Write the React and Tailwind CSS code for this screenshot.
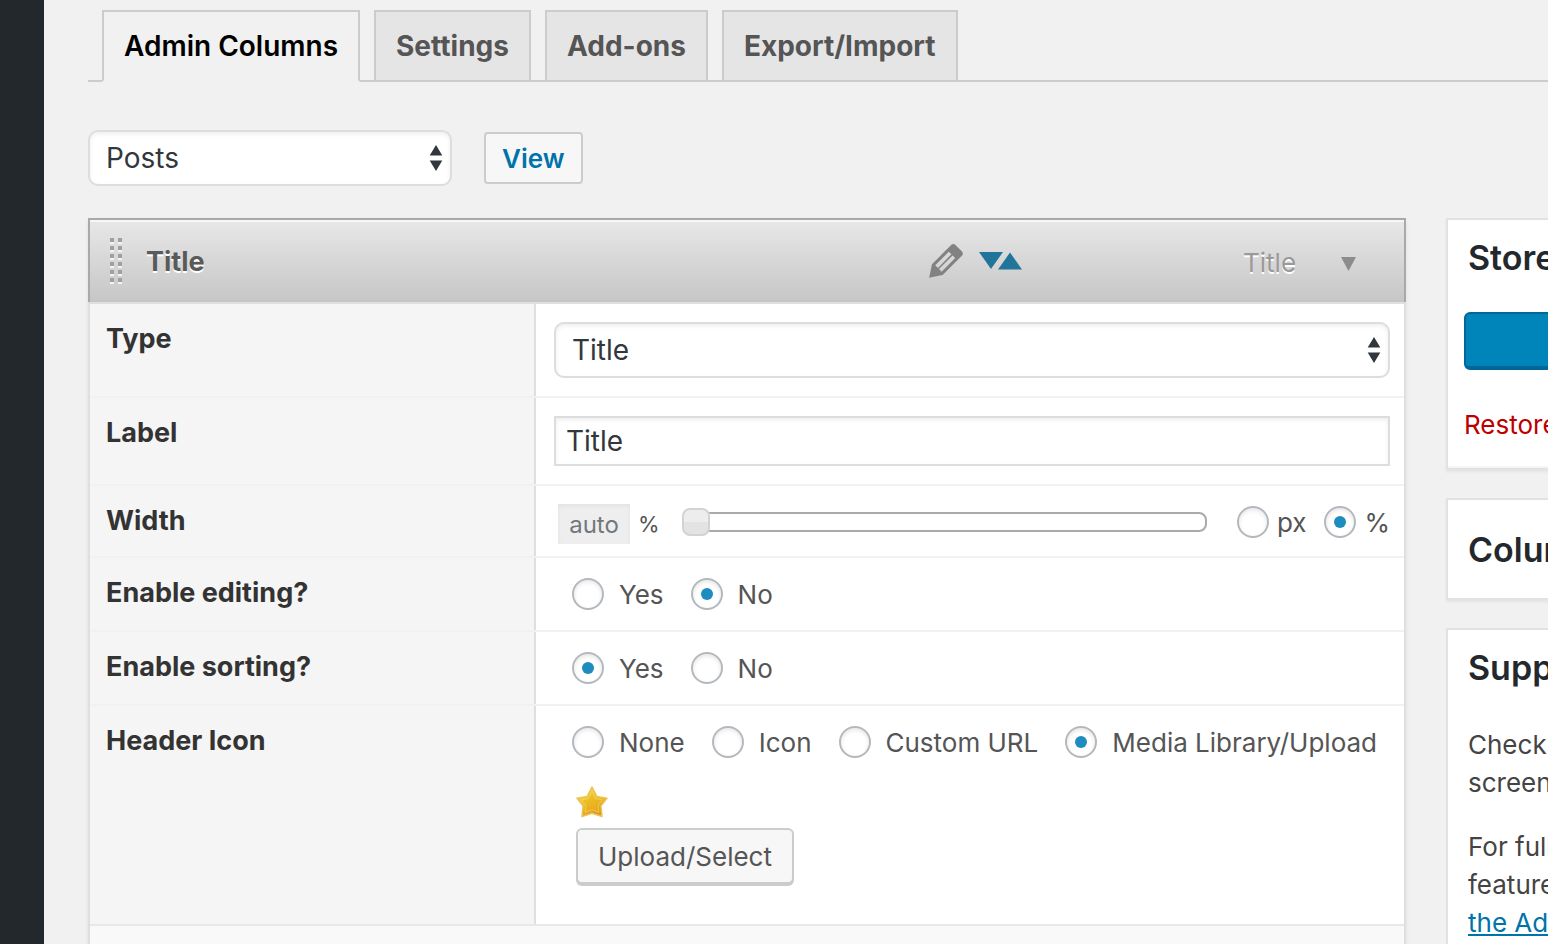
import { useState } from "react";
import clsx from "clsx";

const TABS = ["Admin Columns", "Settings", "Add-ons", "Export/Import"];

const SortArrows = ({ className }) => (
  <svg viewBox="0 0 14 26" className={className} fill="#32373c" aria-hidden="true">
    <path d="M7 0l6.300 10.500H.7z" />
    <path d="M7 26l6.300-10.500H.7z" />
  </svg>
);

const PencilIcon = () => (
  <svg viewBox="3 3 14 14" className="size-[34px]" fill="#828282" aria-hidden="true">
    <path d="M13.890 3.390l2.710 2.720c.46.46.42 1.240.03 1.640l-8.010 8.020-5.560 1.160 1.160-5.580s7.600-7.630 7.990-8.030c.39-.39 1.220-.39 1.680.07zm-2.730 2.790l-5.590 5.610 1.110 1.110 5.540-5.650zm-2.970 8.230l5.580-5.600-1.070-1.080-5.590 5.600z" />
  </svg>
);

const SortingIcon = () => (
  <svg viewBox="0 0 44 18" className="h-[18px] w-[44px]" fill="#21759b" aria-hidden="true">
    <path d="M0 0h24L12 17z" />
    <path d="M19 17.500h24L31 .5z" />
  </svg>
);

const DragHandle = () => (
  <svg viewBox="0 0 14 48" className="h-12 w-3.5" aria-hidden="true">
    {[0, 8, 16, 24, 32, 40].map((y) => (
      <g key={y}>
        <path d={`M2 ${y + 5}h4v2h-4zM10 ${y + 5}h4v2h-4z`} fill="#f3f3f3" />
        <path d={`M2 ${y + 1}h4v4h-4zM10 ${y + 1}h4v4h-4z`} fill="#a0a0a0" />
      </g>
    ))}
  </svg>
);

const StarIcon = () => (
  <svg viewBox="0 0 32 32" className="size-8" aria-hidden="true">
    <defs>
      <linearGradient id="star" x1="0" y1="0" x2="0.500" y2="1">
        <stop offset="0" stopColor="#f9e06a" />
        <stop offset="0.550" stopColor="#efc12a" />
        <stop offset="1" stopColor="#dd9522" />
      </linearGradient>
    </defs>
    <path
      d="M16 1l4.800 9.400L31 12.200l-6 7.600L26 30.500 16 27.200 6 30.500 7 19.800 1 12.200l10.200-1.800z"
      fill="url(#star)"
      stroke="#ecc452"
      strokeWidth="1.500"
      strokeLinejoin="round"
    />
    <path
      d="M16 6l3.400 6.600 7 1.300-4.200 5.300.8 7.200L16 23.800l-7 2.600.8-7.200-4.200-5.300 7-1.300z"
      fill="#e9b41c"
      fillOpacity="0.500"
      stroke="#f6dc6c"
      strokeOpacity="0.600"
    />
  </svg>
);

const SelectBox = ({ id, label, className, children }) => (
  <div className={clsx("relative", className)}>
    <select
      id={id}
      aria-label={label}
      className="block h-14 w-full appearance-none rounded-[10px] border-2 border-[#ddd] bg-white px-4 text-[28px] text-[#32373c] shadow-[inset_0_2px_4px_rgba(0,0,0,0.07)]"
    >
      {children}
    </select>
    <SortArrows className="pointer-events-none absolute top-[15px] right-[9px] h-[26px] w-3.5" />
  </div>
);

const Radio = ({ name, label, checked, onChange, className }) => (
  <label className={clsx("flex items-center whitespace-nowrap", className)}>
    <input
      type="radio"
      name={name}
      checked={checked}
      onChange={onChange}
      className="grid size-8 shrink-0 appearance-none place-items-center rounded-full border-2 border-[#b4b9be] bg-white shadow-[inset_0_2px_4px_rgba(0,0,0,0.1)] before:size-3 before:rounded-full checked:before:bg-[#1e8cbe]"
    />
    {label}
  </label>
);

const RadioRow = ({ name, options, initial }) => {
  const [value, setValue] = useState(initial);

  return (
    <div className="flex h-[72px] items-center gap-[27px] pl-9">
      {options.map((option) => (
        <Radio
          key={option}
          name={name}
          label={option}
          checked={value === option}
          onChange={() => setValue(option)}
          className="gap-[15px]"
        />
      ))}
    </div>
  );
};

const Row = ({ label, htmlFor, children, className }) => (
  <div
    className={clsx(
      "grid grid-cols-[446px_1fr] border-b-2",
      className || "border-[#f1f1f1]"
    )}
  >
    <div className="border-r-2 border-[#dfdfdf] bg-[#f5f5f5] pt-[15px] pl-4">
      <label
        htmlFor={htmlFor}
        className="text-[27px] leading-[38px] font-bold text-[#333]"
      >
        {label}
      </label>
    </div>
    <div className="min-w-0">{children}</div>
  </div>
);

const WidthField = () => {
  const [width, setWidth] = useState(0);
  const [unit, setUnit] = useState("%");

  return (
    <div className="flex h-[70px] items-center pt-0.5 pr-3.5 pl-[22px]">
      <input
        id="width"
        type="text"
        placeholder="auto"
        className="mt-1 h-10 w-[72px] bg-[#eee] text-center text-2xl shadow-[inset_0_2px_4px_rgba(0,0,0,0.05)] placeholder:text-[#72777c]"
      />
      <span className="mt-1 w-[52px] pl-2 text-[22px]">%</span>
      <input
        type="range"
        min="0"
        max="100"
        value={width}
        aria-label="Column width"
        onChange={(e) => setWidth(Number(e.target.value))}
        className="h-7 min-w-0 flex-1 appearance-none bg-transparent [&::-webkit-slider-runnable-track]:h-5 [&::-webkit-slider-runnable-track]:rounded-lg [&::-webkit-slider-runnable-track]:border-2 [&::-webkit-slider-runnable-track]:border-[#aaa] [&::-webkit-slider-runnable-track]:bg-white [&::-webkit-slider-thumb]:-mx-0.5 [&::-webkit-slider-thumb]:-mt-1.5 [&::-webkit-slider-thumb]:size-7 [&::-webkit-slider-thumb]:appearance-none [&::-webkit-slider-thumb]:rounded-lg [&::-webkit-slider-thumb]:border-2 [&::-webkit-slider-thumb]:border-[#d3d3d3] [&::-webkit-slider-thumb]:bg-linear-to-b [&::-webkit-slider-thumb]:from-[#ededed] [&::-webkit-slider-thumb]:from-50% [&::-webkit-slider-thumb]:to-[#e3e3e3] [&::-webkit-slider-thumb]:to-50%"
      />
      <div className="flex gap-[18px] pl-[30px]">
        {["px", "%"].map((item) => (
          <Radio
            key={item}
            name="unit"
            label={item}
            checked={unit === item}
            onChange={() => setUnit(item)}
            className="gap-2"
          />
        ))}
      </div>
    </div>
  );
};

const Card = ({ children, className }) => (
  <section
    className={clsx(
      "w-[560px] border-2 border-[#e2e2e2] bg-white px-5",
      className
    )}
  >
    {children}
  </section>
);

const CardTitle = ({ children }) => (
  <h3 className="text-[34px] leading-[40px] font-semibold text-[#23282d]">
    {children}
  </h3>
);

const ColumnPanel = () => (
  <div className="min-w-0 flex-1 shadow-[0_2px_4px_rgba(0,0,0,0.08)]">
    {/* Column header */}
    <div className="flex h-[84px] items-center border-2 border-b-0 border-[#a9a9a9] bg-linear-to-b from-[#e8e8e8] to-[#c6c6c6] pl-[18px] shadow-[inset_0_2px_0_#f6f6f6]">
      <DragHandle />
      <h2 className="ml-6 flex-1 pt-0.5 text-[27px] font-bold text-[#5a5a5a] [text-shadow:0_2px_0_#fff]">
        Title
      </h2>
      <div className="flex w-[314px] items-center gap-4">
        <PencilIcon />
        <SortingIcon />
      </div>
      <span className="w-[98px] pt-0.5 text-[#999] [text-shadow:0_2px_0_#fff]">
        Title
      </span>
      <button type="button" aria-label="Toggle column" className="w-[63px] pt-1.5">
        <svg viewBox="0 0 15 14" className="h-3.5 w-[15px]" fill="#8c8c8c">
          <path d="M0 0h15L7.500 14z" />
        </svg>
      </button>
    </div>

    {/* Settings */}
    <div className="border-2 border-b-0 border-[#dfdfdf] bg-white">
      <Row label="Type" htmlFor="type">
        <div className="py-[18px] pr-3.5 pl-[18px]">
          <SelectBox id="type">
            <option>Title</option>
          </SelectBox>
        </div>
      </Row>
      <Row label="Label" htmlFor="label">
        <div className="py-[18px] pr-3.5 pl-[18px]">
          <input
            id="label"
            type="text"
            defaultValue="Title"
            className="block h-[50px] w-full border-2 border-[#ddd] bg-white px-2.5 text-[28px] text-[#32373c] shadow-[inset_0_2px_4px_rgba(0,0,0,0.07)]"
          />
        </div>
      </Row>
      <Row label="Width" htmlFor="width">
        <WidthField />
      </Row>
      <Row label="Enable editing?">
        <RadioRow name="editing" options={["Yes", "No"]} initial="No" />
      </Row>
      <Row label="Enable sorting?">
        <RadioRow name="sorting" options={["Yes", "No"]} initial="Yes" />
      </Row>
      <Row label="Header Icon" className="border-[#e8e8e8]">
        <RadioRow
          name="icon"
          options={["None", "Icon", "Custom URL", "Media Library/Upload"]}
          initial="Media Library/Upload"
        />
        <div className="flex flex-col items-start gap-2.5 pt-2 pb-10 pl-10">
          <StarIcon />
          <button
            type="button"
            className="h-14 rounded-md border-2 border-[#ccc] bg-[#f7f7f7] px-5 text-[#555] shadow-[0_2px_0_#ccc]"
          >
            Upload/Select
          </button>
        </div>
      </Row>
      <div className="h-20 bg-[#f9f9f9]" />
    </div>
  </div>
);

const Sidebar = () => (
  <aside className="flex w-[102px] shrink-0 flex-col gap-7 whitespace-nowrap">
    <Card className="pt-[18px] pb-6 shadow-[inset_0_-2px_0_#f5f5f5,0_2px_3px_rgba(0,0,0,0.06)]">
      <CardTitle>Store settings</CardTitle>
      <button
        type="button"
        aria-label="Update"
        className="mt-[34px] -ml-1 block h-[58px] w-[520px] rounded-md border-2 border-b-4 border-[#006799] bg-[#0085ba]"
      />
      <a href="#restore" className="mt-9 -ml-1 block leading-[38px] text-[#b00]">
        Restore columns
      </a>
    </Card>
    <Card className="pt-[30px] pb-7 shadow-[0_2px_3px_rgba(0,0,0,0.06)]">
      <CardTitle>Columns</CardTitle>
    </Card>
    <Card className="pt-[18px] pb-6 leading-[38px] text-[#444]">
      <CardTitle>Support</CardTitle>
      <p className="mt-[38px]">
        Check the Help section
        <br />
        screen.
      </p>
      <p className="mt-[26px]">
        For full documentation
        <br />
        feature suggestions
        <br />
        <a href="#website" className="text-[#0073aa] underline">
          the Admin Columns website
        </a>
      </p>
    </Card>
  </aside>
);

const App = () => {
  const [tab, setTab] = useState(TABS[0]);

  return (
    <div className="flex h-screen overflow-hidden bg-[#f1f1f1] font-[Inter,sans-serif] text-[26px] text-[#555]">
      <div className="w-11 shrink-0 bg-[#23282d]" />
      <main className="min-w-0 flex-1 pt-2.5 pl-11">
        {/* Tabs */}
        <nav className="flex gap-3.5 border-b-2 border-[#ccc] pl-3.5">
          {TABS.map((name) => (
            <button
              key={name}
              type="button"
              onClick={() => setTab(name)}
              className={clsx(
                "-mb-0.5 h-[72px] border-2 border-[#ccc] px-5 text-[28px] whitespace-nowrap",
                tab === name
                  ? "border-b-[#f1f1f1] bg-[#f1f1f1] font-semibold text-black"
                  : "bg-[#e5e5e5] font-bold text-[#555]"
              )}
            >
              {name}
            </button>
          ))}
        </nav>

        <div className="mt-12 flex items-center gap-8">
          <SelectBox label="List screen" className="w-[364px]">
            <option>Posts</option>
          </SelectBox>
          <a
            href="#view"
            className="flex h-[52px] items-center rounded border-2 border-[#ccc] bg-[#f7f7f7] px-4 font-semibold text-[#0073aa]"
          >
            View
          </a>
        </div>

        <div className="mt-8 flex items-start gap-10">
          <ColumnPanel />
          <Sidebar />
        </div>
      </main>
    </div>
  );
};

export default App;
